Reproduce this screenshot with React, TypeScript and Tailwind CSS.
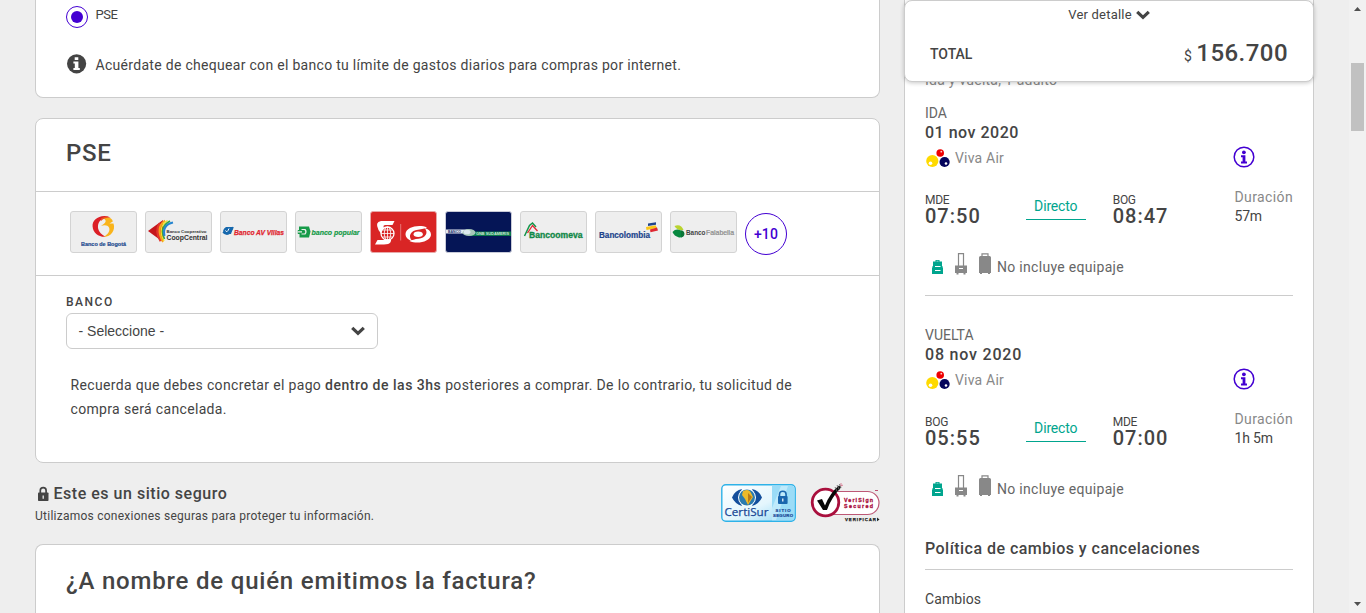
import type { ReactNode } from "react";

const logoFont = "'Liberation Sans', Arial, sans-serif";

function InfoSolid() {
  return (
    <svg width="20" height="20" viewBox="0 0 20 20" className="shrink-0">
      <circle cx="9.600" cy="9.800" r="9.600" fill="#444" />
      <path d="M7.700 3.200h3.600v2.900H7.700zM6.400 7.600h5v6.300h1.400v2H6.400v-2h1.400V9.600H6.400z" fill="#fff" />
    </svg>
  );
}

function InfoOutline() {
  return (
    <svg width="22" height="22" viewBox="0 0 22 22" className="shrink-0">
      <circle cx="11" cy="11" r="9.8" fill="#fff" stroke="#4300d2" strokeWidth="1.5" />
      <circle cx="10.9" cy="6.3" r="1.9" fill="#4300d2" />
      <path d="M8 9.3h4.400v6.3H14v1.900H8v-1.900h1.600v-4.400H8z" fill="#4300d2" />
    </svg>
  );
}

function Chevron({ className }: { className: string }) {
  return (
    <svg viewBox="0 0 14 10" className={className}>
      <path d="M1.200 1.800 7 7.300 12.800 1.800" fill="none" stroke="#444" strokeWidth="3.200" />
    </svg>
  );
}

function BankTile({ children, fill = "#eee", edge = "#d3d3d3" }: { children: ReactNode; fill?: string; edge?: string }) {
  return (
    <svg width="67" height="42" viewBox="0 0 67 42" className="shrink-0" fontFamily={logoFont}>
      <rect x=".5" y=".5" width="66" height="41" rx="2.5" fill={fill} stroke={edge} />
      {children}
    </svg>
  );
}

function Banks() {
  return (
    <>
      <BankTile>
        <path d="M39 5.500C29 3 22 9 22.600 15.500C23 22 29 26.500 36 25.800C30 23 27.500 19 28 14.500C28.500 10 32 7 39 5.500Z" fill="#dc1f26" />
        <path d="M33 7C38 5.500 42.500 7 42.800 10.500L39.500 12.500H43.500C46 20 40 26.500 33.500 25.800C38 23.500 40.500 20 39 16.500C38 14 34.500 13.600 31 14.800C36 12 37.500 9.500 33 7Z" fill="#f9b41b" />
        <path d="M31 7.500C34 5.500 39 5.200 40.500 7C37.500 6.200 34 7 31 10Z" fill="#e9531f" />
        <text x="11" y="34.700" fontSize="6" fontWeight="700" fill="#234a8f" stroke="#234a8f" strokeWidth=".2" textLength="45" lengthAdjust="spacingAndGlyphs">Banco de Bogotá</text>
      </BankTile>
      <BankTile>
        <path d="M3 20 18 9v22Z" fill="#c5161d" />
        <path d="M15 12.500Q10 20 16 30" stroke="#e3352b" strokeWidth="3" fill="none" />
        <path d="M20 9.500Q10 17 18 31" stroke="#f7a51b" strokeWidth="1.800" fill="none" />
        <path d="M22.500 9.500Q12 16 19 30" stroke="#f4e02a" strokeWidth="1.400" fill="none" />
        <path d="M25 10Q14 16 19.500 28" stroke="#37a34a" strokeWidth="1.700" fill="none" />
        <path d="M28 11.500Q17 14 19.500 25" stroke="#2685d0" strokeWidth="2" fill="none" />
        <text x="21.500" y="21.800" fontSize="4" fontWeight="700" fill="#333" textLength="40" lengthAdjust="spacingAndGlyphs">Banco Cooperativo</text>
        <text x="21.500" y="29" fontSize="7" fontWeight="700" fill="#333" textLength="41" lengthAdjust="spacingAndGlyphs">CoopCentral</text>
      </BankTile>
      <BankTile>
        <path d="M6 16h7l-2 7H4Q1.500 19 6 16Z" fill="#1668ad" />
        <path d="M3 21Q9 27 13 16" fill="none" stroke="#1668ad" strokeWidth="1.700" />
        <path d="M5.500 19.500Q7 22.500 9 17.500" fill="none" stroke="#fff" strokeWidth="1" />
        <text x="14" y="23.600" fontSize="7" fontWeight="700" fontStyle="italic" fill="#e12630" stroke="#e12630" strokeWidth=".25" textLength="50" lengthAdjust="spacingAndGlyphs">Banco AV Villas</text>
      </BankTile>
      <BankTile>
        <path d="M4 15.500h10l1.500 5-1.500 6H4.500v-3.500H2.800v-4H4Z" fill="#169b49" />
        <path d="M3 20.800h4M6.500 18.500h3.500q2 2.300 0 4.500H6.500" fill="none" stroke="#eee" strokeWidth="1.200" />
        <text x="16.500" y="23.500" fontSize="7" fontWeight="700" fontStyle="italic" fill="#169b49" stroke="#169b49" strokeWidth=".2" textLength="48" lengthAdjust="spacingAndGlyphs">banco popular</text>
      </BankTile>
      <BankTile fill="#d92525" edge="#e7a9a9">
        <path d="M11 10H24.500L22.500 14H15.500Q12.500 14 14 17L20 24Q24 33.500 14 33.500H5L7.500 29H13Q15 29 13.500 26L8.500 19Q4.500 11 11 10Z" fill="#fff" />
        <circle cx="17.500" cy="22.500" r="6.500" fill="#d92525" stroke="#fff" strokeWidth="1.300" />
        <path d="M11 22.500h13M17.500 16v13M12.500 19h10M12.500 26h10" stroke="#fff" strokeWidth=".8" />
        <ellipse cx="17.500" cy="22.500" rx="3.200" ry="6.500" fill="none" stroke="#fff" strokeWidth=".8" />
        <path d="M30.700 13v16.500" stroke="#ec8b8b" strokeWidth=".8" />
        <path d="M57 16.500C49 13 36 16 35.500 23C35.500 26.500 38.500 29 42 29.800C37.500 25 41 19.500 48 18.800C52 18.300 55 17.500 57 16.500Z" fill="#fff" />
        <path d="M39.500 30C47 33.500 60 31 61 24C61.200 20.500 58.500 18 54.500 17C59 21.500 55.500 27 48.500 27.800C45 28.200 41.500 29 39.500 30Z" fill="#fff" />
        <ellipse cx="48.200" cy="23.300" rx="4.600" ry="2.700" fill="#fff" />
      </BankTile>
      <BankTile fill="#051556" edge="#c9cbd8">
        <path d="M1 18.500h23v4H1z" fill="#e7ebf2" />
        <path d="M24 20.500h42v4.500H24z" fill="#0a7a4b" />
        <ellipse cx="24" cy="21.500" rx="6.500" ry="3.600" fill="#a6c7b8" />
        <ellipse cx="22" cy="21" rx="3.500" ry="2.300" fill="#dbe8ee" />
        <text x="3" y="22.200" fontSize="4.300" fontWeight="700" fill="#22336f" textLength="13" lengthAdjust="spacingAndGlyphs">BANCO</text>
        <text x="31" y="24.300" fontSize="4.300" fontWeight="700" fill="#d1e8da" textLength="33" lengthAdjust="spacingAndGlyphs">GNB SUDAMERIS</text>
      </BankTile>
      <BankTile>
        <path d="M4.500 25 9.500 14.500l3-2.500 3.500 4" fill="none" stroke="#12964a" strokeWidth="1.500" />
        <path d="M7.500 22 12.500 14.500l5 5.500" fill="none" stroke="#e02a35" strokeWidth="1.300" />
        <text x="9" y="26.500" fontSize="8.300" fontWeight="700" fill="#118847" stroke="#118847" strokeWidth=".3" textLength="53.500" lengthAdjust="spacingAndGlyphs">Bancoomeva</text>
      </BankTile>
      <BankTile>
        <path d="M53 12.500 61 11.300v2.500l-8 1.200Z" fill="#21448c" />
        <path d="M51 16 60.500 14.200 62 17l-10.500 2Z" fill="#fac515" />
        <path d="M55 18.500 62 16.500 63 19.500l-7.500 1.800Z" fill="#df2832" />
        <text x="4" y="26.700" fontSize="8.300" fontWeight="700" fill="#21448c" stroke="#21448c" strokeWidth=".2" textLength="51" lengthAdjust="spacingAndGlyphs">Bancolombia</text>
      </BankTile>
      <BankTile>
        <path d="M4.500 15Q11 12.500 13.500 19Q7 20 4.500 15Z" fill="#b9d32e" />
        <path d="M2.500 21Q7 16 14 21.500Q14 27 9 26.500Q4 25 2.500 21Z" fill="#07883f" />
        <path d="M11 19.500Q14 19 14.500 23Q14 26 11 26.500Z" fill="#0b7538" />
        <text x="16" y="23.500" fontSize="6.800" fontWeight="700" fill="#444" textLength="19.500" lengthAdjust="spacingAndGlyphs">Banco</text>
        <text x="36" y="23.500" fontSize="6.800" fill="#8b8b8b" stroke="#8b8b8b" strokeWidth=".2" textLength="28" lengthAdjust="spacingAndGlyphs">Falabella</text>
      </BankTile>
    </>
  );
}

function CertiSur() {
  return (
    <svg width="75" height="38" viewBox="0 0 75 38" fontFamily={logoFont}>
      <defs>
        <linearGradient id="cert" x1="0" y1="0" x2="1" y2="1">
          <stop offset="0" stopColor="#fff" />
          <stop offset=".55" stopColor="#e4f6fd" />
          <stop offset="1" stopColor="#8bd6f5" />
        </linearGradient>
      </defs>
      <rect x=".8" y=".8" width="73.400" height="36.400" rx="4" fill="url(#cert)" stroke="#2eb2e8" strokeWidth="1.400" />
      <path d="M51 1.500h19q3.500 0 3.500 3.500v28q0 3.500-3.500 3.500H51z" fill="#9bdcf7" />
      <path d="M51 24 60 2h7L55 36h-4z" fill="#bfeafb" />
      <path d="M11 13.500Q14 6 21 5Q16 13 21 22Q14 20 11 13.500ZM41 13.500Q38 6 31 5Q36 13 31 22Q38 20 41 13.500Z" fill="#144f9c" />
      <circle cx="26" cy="13.500" r="9" fill="#fff" />
      <circle cx="26" cy="13.500" r="8" fill="#2b7bb0" />
      <path d="M22 7Q28 4 30 9L32 13L27 21L24 15L21 11Z" fill="#edba2b" />
      <path d="M27 9 31 13 27 19Z" fill="#b97a18" />
      <text x="3.500" y="32" fontFamily="'Open Sans', 'Noto Sans', sans-serif" fontSize="11.500" fill="#184795" textLength="44" lengthAdjust="spacingAndGlyphs" stroke="#184795" strokeWidth=".25">CertiSur</text>
      <path d="M58.500 13V10.500a3.300 3.300 0 0 1 6.600 0V13" fill="none" stroke="#1966ae" strokeWidth="1.600" />
      <rect x="57" y="12" width="9.600" height="8" rx="1" fill="#1966ae" />
      <path d="M61.800 14.500v3" stroke="#fff" strokeWidth="1.200" />
      <text x="54.500" y="27.600" fontSize="4.300" fontWeight="700" fill="#184795" stroke="#184795" strokeWidth=".2" textLength="15">SITIO</text>
      <text x="52" y="33" fontSize="4.300" fontWeight="700" fill="#184795" stroke="#184795" strokeWidth=".2" textLength="20">SEGURO</text>
    </svg>
  );
}

function VeriSign() {
  return (
    <svg width="72" height="40" viewBox="0 0 72 40" fontFamily={logoFont}>
      <rect x="12" y="8.500" width="57" height="23" rx="11.500" fill="#fff" stroke="#bd5876" strokeWidth="1.200" />
      <circle cx="15.500" cy="19.500" r="13.300" fill="#fff" stroke="#a90f3d" strokeWidth="2.800" />
      <path d="M7 17.500 12 16l3 6.500Q20 10 29 2.500L31 4.500Q21 15 17 27h-4Z" fill="#080808" />
      <path d="M27 2 29.500 7M29.500 1 31 5M25 4 27.500 9" stroke="#6b6b6b" strokeWidth=".9" />
      <path d="M31 0v3l2-1" stroke="#d26580" fill="none" strokeWidth=".8" />
      <text x="34" y="18.800" fontSize="5.300" fontWeight="700" fill="#a90f3d" stroke="#a90f3d" strokeWidth=".3" textLength="29">VeriSign</text>
      <text x="34" y="25.200" fontSize="5.300" fontWeight="700" fill="#a90f3d" stroke="#a90f3d" strokeWidth=".3" textLength="29">Secured</text>
      <path d="M65 7.500h3" stroke="#a90f3d" strokeWidth=".7" />
      <text x="35" y="38" fontSize="4.400" fontWeight="700" fill="#222" stroke="#222" strokeWidth=".25" textLength="31">VERIFICAR</text>
      <path d="M67 34.500 69.500 36.500 67 38.300Z" fill="#222" />
    </svg>
  );
}

function AirlineMark() {
  return (
    <svg width="24" height="20" viewBox="0 0 24 20" className="shrink-0">
      <circle cx="6.300" cy="12" r="6.100" fill="#ffda00" />
      <circle cx="14.200" cy="4" r="3.800" fill="#ef0000" />
      <circle cx="18.600" cy="13" r="5.100" fill="#04045c" />
      <circle cx="4.500" cy="14.200" r="1.800" fill="#fff" />
      <circle cx="15.300" cy="2.700" r=".9" fill="#ffc9c9" />
      <circle cx="20" cy="14.500" r="1.300" fill="#fff" />
    </svg>
  );
}

function Luggage() {
  return (
    <svg width="66" height="22" viewBox="0 0 66 22" className="shrink-0">
      <path d="M9.500 7h4v1.500H16V13h.5v1.500H17V21H6v-6.500h.500V13H7V8.500h2.500z" fill="#00a58e" />
      <path d="M9 13.500h5.500M9 17.500h5.500" stroke="#fff" strokeWidth="1.200" />
      <path d="M10.500 8.200h2" stroke="#b5e5de" strokeWidth=".8" />
      <path d="M32.500 13V.7h5V13" fill="none" stroke="#888" strokeWidth="1.200" />
      <path d="M29 12.500h12V20h-1.500v1.500h-2V20h-5v1.500h-2V20H29z" fill="#888" />
      <path d="M33 15.500h4" stroke="#fff" strokeWidth="1" />
      <path d="M56 3V.8h6V3" fill="none" stroke="#888" strokeWidth="1.200" />
      <path d="M53 4.500Q53 3 54.500 3h9Q65 3 65 4.500V20h-1v1h-2v-1h-6v1h-2v-1h-1z" fill="#888" />
    </svg>
  );
}

type Leg = { label: string; date: string; dateSpacing: string; from: string; out: string; to: string; arrive: string; time: string };

const legs: Leg[] = [
  { label: "IDA", date: "01 nov 2020", dateSpacing: "tracking-[0.5px]", from: "MDE", out: "07:50", to: "BOG", arrive: "08:47", time: "57m" },
  { label: "VUELTA", date: "08 nov 2020", dateSpacing: "tracking-[0.8px]", from: "BOG", out: "05:55", to: "MDE", arrive: "07:00", time: "1h 5m" },
];

function Stop({ code, hour, className }: { code: string; hour: string; className: string }) {
  return (
    <div className={className}>
      <div className="mt-[6px] h-[13px] text-[12px] leading-[14px] tracking-[-0.3px]">{code}</div>
      <div className="h-5 text-[20px] font-medium leading-5 tracking-[1px]">{hour}</div>
    </div>
  );
}

function LegBlock({ leg }: { leg: Leg }) {
  return (
    <section className="h-[222px]">
      <div className="h-5 text-[14px] leading-5 text-[#666]">{leg.label}</div>
      <div className={`h-[18px] text-[16px] font-medium leading-[20px] ${leg.dateSpacing}`}>{leg.date}</div>
      <div className="flex h-[34px] items-center pl-px pr-[38px]">
        <span className="pt-px"><AirlineMark /></span>
        <span className="ml-[5px] text-[14px] tracking-[0.2px] text-[#888]">Viva Air</span>
        <span className="ml-auto mt-[-2px]"><InfoOutline /></span>
      </div>
      <div className="mt-[12px] flex h-[39px]">
        <Stop code={leg.from} hour={leg.out} className="w-[101px]" />
        <div className="mt-[9px] h-[24px] w-[60px] border-b border-[#00a58e] text-center text-[14px] leading-[21px] tracking-[-0.15px] text-[#00a58e]">Directo</div>
        <Stop code={leg.to} hour={leg.arrive} className="ml-[27px] w-[122px]" />
        <div className="text-[14px]">
          <div className="h-[19px] leading-[21px] tracking-[0.38px] text-[#888]">Duración</div>
          <div className="h-5 leading-5 tracking-[-0.2px]">{leg.time}</div>
        </div>
      </div>
      <div className="mt-[26px] flex h-[24px] items-start">
        <span className="pl-px pt-px"><Luggage /></span>
        <span className="ml-[5px] mt-[5px] text-[14px] leading-5 tracking-[0.3px] text-[#666]">No incluye equipaje</span>
      </div>
      {leg.label === "IDA" && <div className="mt-[19px] h-px bg-[#ccc]" />}
    </section>
  );
}

export default function App() {
  return (
    <div className="flex h-[613px] w-[1366px] overflow-hidden bg-[#eee] font-['Roboto','Noto_Sans',sans-serif] text-[#444]">
      <main className="ml-[35px] flex w-[845px] shrink-0 flex-col">
        <section className="h-[98px] shrink-0 rounded-b-lg border border-t-0 border-[#ccc] bg-white pl-[30px]">
          <div className="flex h-[33px] items-center">
            <span className="flex h-[22px] w-[22px] items-center justify-center rounded-full border border-[#4300d2]">
              <span className="h-3 w-3 rounded-full bg-[#4300d2]" />
            </span>
            <span className="ml-[7.500px] -mt-[3px] text-[13px] tracking-[-0.4px]">PSE</span>
          </div>
          <div className="mt-[20px] flex h-[22px] items-center pl-px">
            <InfoSolid />
            <span className="ml-[8.500px] mt-[3px] text-[14px] tracking-[0.3px]">Acuérdate de chequear con el banco tu límite de gastos diarios para compras por internet.</span>
          </div>
        </section>

        <section className="mt-5 h-[345px] shrink-0 rounded-lg border border-[#ccc] bg-white">
          <h2 className="flex h-[73px] items-center border-b border-[#ccc] pb-1 pl-[30px] text-[24px] font-medium tracking-[0.7px]">PSE</h2>
          <div className="flex h-[84px] items-start gap-2 border-b border-[#ccc] pl-[34px] pt-[19px]">
            <Banks />
            <span className="mt-[2px] flex h-[42px] w-[42px] items-center justify-center rounded-full border border-[#4300d2] text-[14px] font-medium tracking-[0.1px] text-[#4300d2]">+10</span>
          </div>
          <div className="pl-[30px] pt-[18px]">
            <div className="h-[19px] text-[12px] font-medium leading-[17px] tracking-[1.5px]">BANCO</div>
            <div className="flex h-9 w-[312px] items-center justify-between rounded-md border border-[#ccc] pl-[11.500px] pr-3">
              <span className="font-['Liberation_Sans',Arial,sans-serif] text-[14px]">- Seleccione -</span>
              <Chevron className="h-[10px] w-[14px]" />
            </div>
            <p className="ml-[4.500px] mt-[24px] whitespace-nowrap text-[14px] leading-6 tracking-[0.34px]">
              Recuerda que debes concretar el pago <b className="font-medium tracking-[0.51px]">dentro de las 3hs</b> posteriores a comprar. De lo contrario, tu solicitud de
              <br />
              compra será cancelada.
            </p>
          </div>
        </section>

        <section className="flex h-[81px] shrink-0 pt-[20px]">
          <div>
            <div className="flex h-[22px] items-center">
              <svg width="16" height="16" viewBox="0 0 16 16">
                <path d="M5.300 8V4.500a2.900 2.900 0 0 1 5.800 0V8" fill="none" stroke="#444" strokeWidth="1.700" />
                <rect x="3" y="6.500" width="10.500" height="8.500" rx=".8" fill="#444" />
                <path d="M8.200 9.500v3.200" stroke="#eee" strokeWidth="1.300" />
              </svg>
              <span className="ml-[2.500px] text-[16px] font-medium tracking-[0.52px]">Este es un sitio seguro</span>
            </div>
            <div className="mt-px text-[12px] leading-5 tracking-[0.25px]">Utilizamos conexiones seguras para proteger tu información.</div>
          </div>
          <div className="ml-auto flex gap-[14px]">
            <span className="pt-px"><CertiSur /></span>
            <span className="-mr-[2px]"><VeriSign /></span>
          </div>
        </section>

        <section className="h-[120px] shrink-0 rounded-t-lg border border-b-0 border-[#ccc] bg-white pl-[30px] pt-[20px]">
          <h2 className="whitespace-nowrap text-[24px] font-medium leading-8 tracking-[0.8px]">¿A nombre de quién emitimos la factura?</h2>
        </section>
      </main>

      <aside className="relative ml-6 w-[410px] shrink-0 border-x border-[#ccc] bg-white px-5 pt-[70px]">
        <div className="absolute -left-px -right-px top-0 h-[82px] rounded-lg border border-[#ccc] bg-white shadow-[0_1px_4px_rgba(0,0,0,0.22)]">
          <div className="flex h-[27px] items-center justify-center gap-[4px] text-[13px] tracking-[0.2px]">
            Ver detalle
            <Chevron className="h-[10px] w-[14px]" />
          </div>
          <div className="flex h-[49px] items-center justify-between px-[25px]">
            <span className="mt-[4px] text-[14px] font-medium">TOTAL</span>
            <span className="text-[24px] font-medium tracking-[0.45px]"><span className="mr-[4px] text-[14px] font-normal">$</span>156.700</span>
          </div>
        </div>
        <div className="h-[33px] text-[14px] leading-5 tracking-[0.23px] text-[#888]">Ida y vuelta, 1 adulto</div>
        {legs.map((leg) => (
          <LegBlock key={leg.label} leg={leg} />
        ))}
        <h3 className="-mt-[10px] h-[33px] border-b border-[#ccc] text-[16px] font-medium leading-6 tracking-[0.46px]">Política de cambios y cancelaciones</h3>
        <div className="mt-[19px] text-[14px] leading-5 tracking-[0.1px]">Cambios</div>
      </aside>

      <div className="ml-auto flex h-full w-[17px] shrink-0 flex-col items-center bg-[#f1f1f1]">
        <svg width="17" height="17" viewBox="0 0 17 17"><path d="M5 11 8.500 7l3.500 4z" fill="#505050" /></svg>
        <div className="mt-[46px] h-[68px] w-[13px] bg-[#c1c1c1]" />
        <svg width="17" height="17" viewBox="0 0 17 17" className="mt-auto"><path d="M5 6 8.500 10 12 6z" fill="#505050" /></svg>
      </div>
    </div>
  );
}
